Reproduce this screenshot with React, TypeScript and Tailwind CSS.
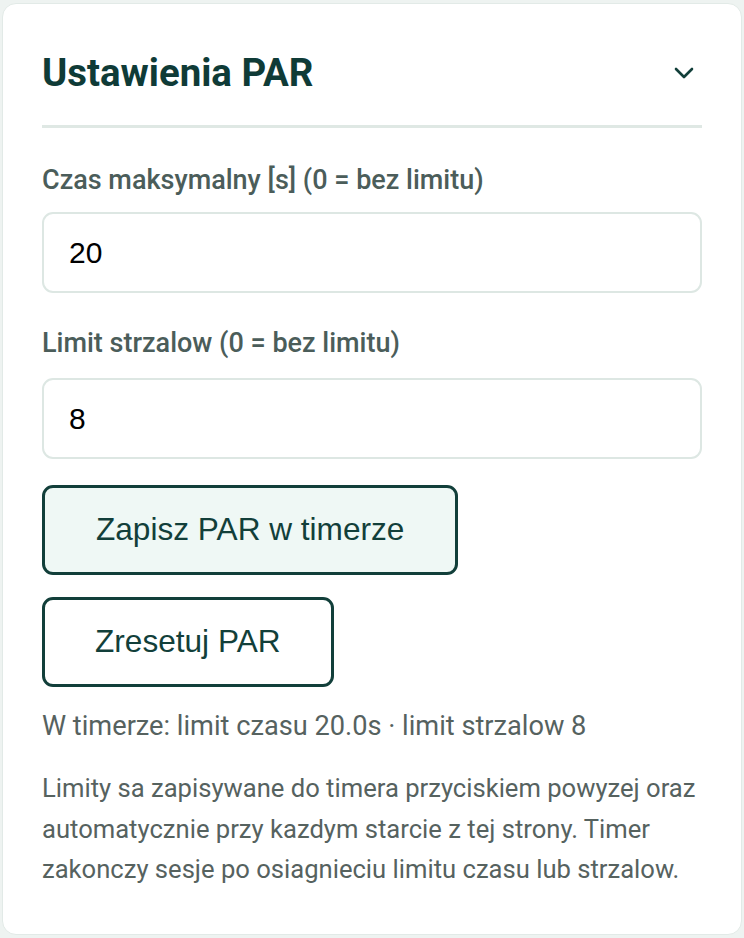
import React, { useState } from "react";

function Chevron() {
  return (
    <svg width="20" height="12" viewBox="0 0 20 12" fill="none" stroke="#123f3a" strokeWidth="2.6" strokeLinecap="round" strokeLinejoin="round">
      <path d="M2 2l8 8 8-8" />
    </svg>
  );
}

export default function App() {
  const [maxTime, setMaxTime] = useState("20");
  const [shotLimit, setShotLimit] = useState("8");

  return (
    <div className="min-h-[938px] bg-[#eef3f1] p-[2px] pt-[3px]" style={{ fontFamily: "Roboto, 'Liberation Sans', sans-serif" }}>
      <section className="h-[932px] rounded-[14px] border border-[#e2eae7] bg-white px-[39px] pt-[47px]">
        <div className="flex items-center justify-between border-b-[3px] border-[#dfe8e4] pb-[30px]">
          <h2 className="text-[38.4px] font-bold leading-[44px] text-[#0f3b37]">Ustawienia PAR</h2>
          <button className="mr-[8px] flex h-[28px] w-[20px] items-center justify-center">
            <Chevron />
          </button>
        </div>

        <div className="mt-[37px] flex flex-col">
          <label className="text-[27px] font-medium leading-[30px] text-[#4b5d5a]">Czas maksymalny [s] (0 = bez limitu)</label>
          <input
            value={maxTime}
            onChange={(e) => setMaxTime(e.target.value)}
            className="mt-[17px] h-[81px] w-full rounded-[11px] border-2 border-[#dde7e3] bg-white px-[25px] text-[30px] text-black outline-none"
            style={{ fontFamily: "'Liberation Sans', Arial, sans-serif" }}
          />

          <label className="mt-[35px] text-[27px] font-medium leading-[30px] text-[#4b5d5a]">Limit strzalow (0 = bez limitu)</label>
          <input
            value={shotLimit}
            onChange={(e) => setShotLimit(e.target.value)}
            className="mt-[20px] h-[81px] w-full rounded-[11px] border-2 border-[#dde7e3] bg-white px-[25px] text-[30px] text-black outline-none"
            style={{ fontFamily: "'Liberation Sans', Arial, sans-serif" }}
          />
        </div>

        <div className="mt-[26px] flex flex-col items-start gap-[22px]" style={{ fontFamily: "'Liberation Sans', Arial, sans-serif" }}>
          <button className="h-[90px] rounded-[11px] border-[3px] border-[#123f3a] bg-[#eff8f5] px-[51px] text-[31.6px] text-[#123f3a]">
            Zapisz PAR w timerze
          </button>
          <button className="h-[90px] rounded-[11px] border-[3px] border-[#123f3a] bg-white px-[50px] text-[31.6px] text-[#123f3a]">
            Zresetuj PAR
          </button>
        </div>

        <p className="mt-[22px] text-[27.2px] leading-[34px] text-[#56625f]">W timerze: limit czasu 20.0s · limit strzalow 8</p>
        <p className="mt-[25px] text-[25.6px] leading-[40.6px] text-[#56625f]">
          Limity sa zapisywane do timera przyciskiem powyzej oraz automatycznie przy kazdym starcie z tej strony. Timer
          zakonczy sesje po osiagnieciu limitu czasu lub strzalow.
        </p>
      </section>
    </div>
  );
}
